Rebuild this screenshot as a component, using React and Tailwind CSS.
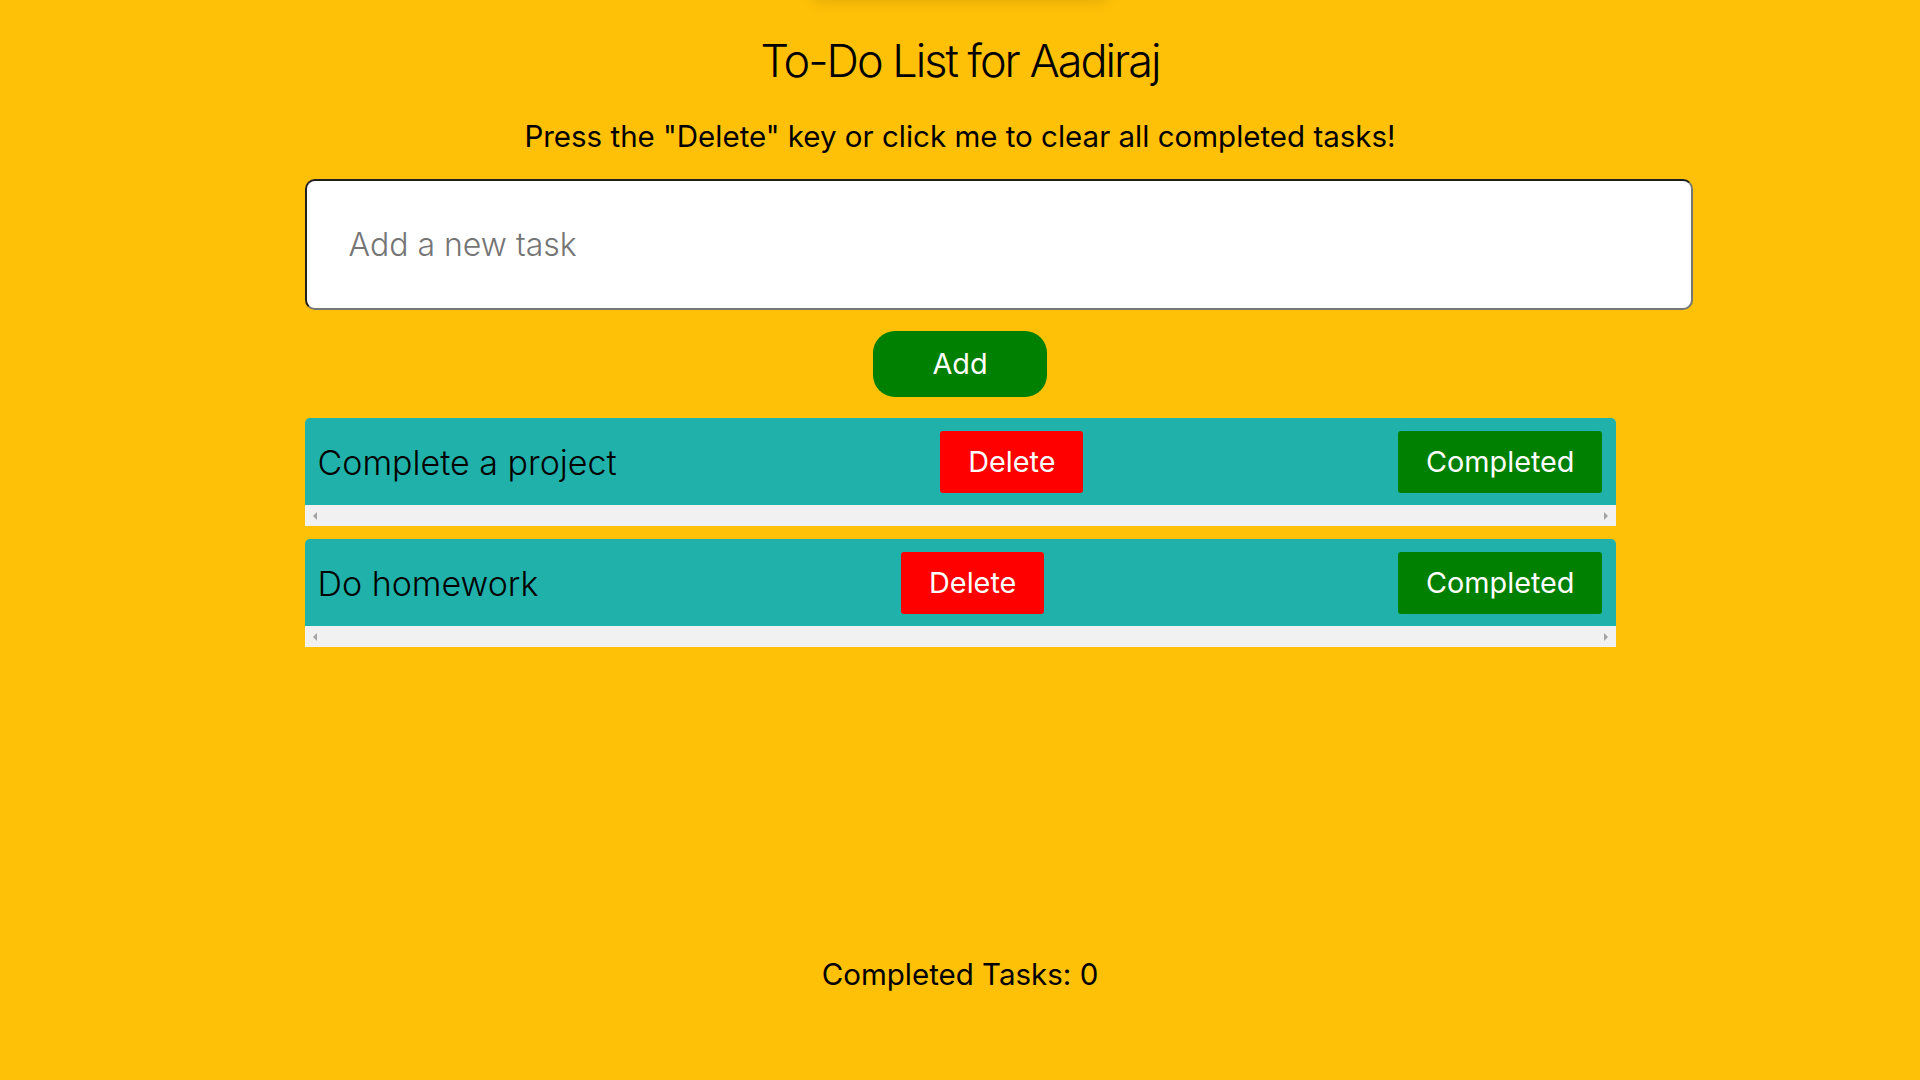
import { useState, useEffect } from 'react';

const TASKS = [
  { id: 1, text: 'Complete a project' },
  { id: 2, text: 'Do homework' },
];

// fake horizontal scrollbar under each task row
function ScrollStrip() {
  return (
    <div className="h-[21px] bg-[#f1f1f1] flex items-center justify-between px-[8px]">
      <svg width="5" height="8" viewBox="0 0 5 8"><path d="M4 0 L0 4 L4 8 Z" fill="#a3a3a3" /></svg>
      <svg width="5" height="8" viewBox="0 0 5 8"><path d="M1 0 L5 4 L1 8 Z" fill="#a3a3a3" /></svg>
    </div>
  );
}

function TaskItem({ task, onDelete, onComplete }) {
  return (
    <div className="rounded-t-[5px] overflow-hidden">
      <div className="bg-[#20b2aa] flex items-center justify-between pt-[13px] pb-[12px] pl-[13px] pr-[13px]">
        <span className="text-[34px] font-light leading-[1.21] text-black">{task.text}</span>
        <button onClick={() => onDelete(task.id)} className="ml-[9px] h-[62px] px-[28px] bg-[#ff0000] text-white text-[28.8px] leading-[1.21] rounded-[3px]">
          Delete
        </button>
        <button onClick={() => onComplete(task.id)} className="h-[62px] px-[28px] bg-[#008000] text-white text-[28.8px] leading-[1.21] rounded-[3px]">
          Completed
        </button>
      </div>
      <ScrollStrip />
    </div>
  );
}

export default function App() {
  const [tasks, setTasks] = useState(TASKS);
  const [input, setInput] = useState('');
  const [completed, setCompleted] = useState(0);

  const addTask = () => {
    if (!input.trim()) return;
    setTasks(prev => [...prev, { id: Date.now(), text: input.trim() }]);
    setInput('');
  };

  useEffect(() => {
    const onKey = (e) => {
      if (e.key === 'Delete') setCompleted(0);
    };
    window.addEventListener('keydown', onKey);
    return () => window.removeEventListener('keydown', onKey);
  }, []);

  return (
    <div className="relative min-h-screen bg-[#ffc107] text-black overflow-hidden" style={{ fontFamily: 'Inter, "Noto Sans", sans-serif' }}>
      {/* faint shadow of something sitting just above the viewport */}
      <div className="absolute top-[-30px] left-1/2 -translate-x-1/2 w-[300px] h-[30px] rounded-[10px] shadow-[0_2px_14px_rgba(0,0,0,0.12)]"></div>

      <h1 className="pt-[34px] text-center text-[45px] leading-[1.21] font-light tracking-[-2px]">To-Do List for Aadiraj</h1>

      <p onClick={() => setCompleted(0)} className="mt-[31px] text-center text-[29.5px] leading-[1.21] cursor-pointer">
        Press the "Delete" key or click me to clear all completed tasks!
      </p>

      <div className="w-[1311px] mx-auto mt-[24px]">
        <input
          type="text"
          value={input}
          onChange={(e) => setInput(e.target.value)}
          onKeyDown={(e) => e.key === 'Enter' && addTask()}
          placeholder="Add a new task"
          className="block w-[1388px] h-[131px] bg-white rounded-[10px] border-2 border-t-[#1f1f1f] border-l-[#1f1f1f] border-r-[#767676] border-b-[#767676] pl-[42px] pr-[20px] text-[32px] font-light outline-none placeholder:text-[#757575]"
        />

        <div className="flex justify-center mt-[21px]">
          <button onClick={addTask} className="w-[174px] h-[66px] bg-[#008000] text-white text-[28.8px] leading-[1.21] rounded-[22px]">
            Add
          </button>
        </div>

        <div className="mt-[21px] flex flex-col gap-[13px]">
          {tasks.map(task => (
            <TaskItem
              key={task.id}
              task={task}
              onDelete={(id) => setTasks(prev => prev.filter(t => t.id !== id))}
              onComplete={(id) => {
                setTasks(prev => prev.filter(t => t.id !== id));
                setCompleted(c => c + 1);
              }}
            />
          ))}
        </div>
      </div>

      <p className="mt-[310px] text-center text-[29.5px] leading-[1.21]">Completed Tasks: {completed}</p>
    </div>
  );
}
